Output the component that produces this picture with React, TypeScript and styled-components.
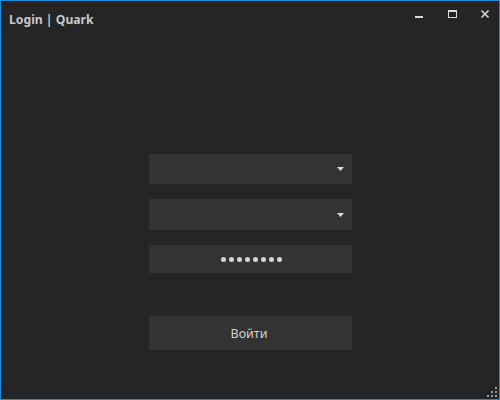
import React from "react";
import styled, { createGlobalStyle } from "styled-components";

const Global = createGlobalStyle`
  html, body { margin: 0; padding: 0; background: #252525; }
  * { box-sizing: border-box; }
`;

const Window = styled.div`
  position: relative;
  width: 500px;
  height: 400px;
  background: #252525;
  border: 1px solid #1b8ce0;
  display: flex;
  flex-direction: column;
  font-family: "Noto Sans", "Open Sans", sans-serif;
  color: #d2d2d2;
`;

const TitleBar = styled.div`
  display: flex;
  align-items: flex-start;
  justify-content: space-between;
  height: 38px;
  padding-left: 8px;
`;

const Title = styled.div`
  font-family: "Noto Sans", "Open Sans", sans-serif;
  font-weight: 700;
  font-size: 12.2px;
  line-height: 18px;
  margin-top: 10px;
  color: #c8c8c8;
`;

const Controls = styled.div`
  display: flex;
`;

const CtrlBtn = styled.div`
  width: 33px;
  height: 26px;
  display: flex;
  align-items: center;
  justify-content: flex-end;
  padding-right: 9px;
  svg { display: block; }
`;

const Body = styled.div`
  flex: 1;
  display: flex;
  justify-content: center;
  padding-top: 115px;
`;

const Form = styled.div`
  width: 203px;
  display: flex;
  flex-direction: column;
`;

const Field = styled.div<{ $h: number; $mb: number }>`
  height: ${(p) => p.$h}px;
  margin-bottom: ${(p) => p.$mb}px;
  background: #333333;
  display: flex;
  align-items: center;
  justify-content: flex-end;
  padding-right: 8px;
`;

const PasswordField = styled.div`
  height: 28px;
  margin-bottom: 43px;
  background: #333333;
  display: flex;
  align-items: center;
  justify-content: center;
  padding-left: 2px;
`;

const Dots = styled.span`
  display: flex;
  gap: 3px;
`;

const Dot = styled.span`
  width: 5px;
  height: 5px;
  border-radius: 50%;
  background: #d4d4d4;
`;

const Button = styled.div`
  height: 34px;
  background: #333333;
  display: flex;
  align-items: center;
  justify-content: center;
  font-size: 12.5px;
  color: #d0d0d0;
  padding-top: 1px;
  padding-right: 2px;
`;

const Grip = styled.svg`
  position: absolute;
  right: 1px;
  bottom: 1px;
`;

const Arrow = () => (
  <svg width="7" height="4" viewBox="0 0 7 4">
    <path d="M0 0H7L3.5 4Z" fill="#d8d8d8" />
  </svg>
);

export default function App() {
  return (
    <>
      <Global />
      <Window>
        <TitleBar>
          <Title>Login | Quark</Title>
          <Controls>
            <CtrlBtn>
              <svg width="10" height="10" viewBox="0 0 10 10">
                <rect x="1" y="7" width="8" height="2" fill="#d8d8d8" />
              </svg>
            </CtrlBtn>
            <CtrlBtn>
              <svg width="10" height="10" viewBox="0 0 10 10">
                <rect x="1.5" y="1.5" width="8" height="7" fill="none" stroke="#d8d8d8" strokeWidth="1" />
                <rect x="1" y="1" width="9" height="2" fill="#d8d8d8" />
              </svg>
            </CtrlBtn>
            <CtrlBtn>
              <svg width="10" height="10" viewBox="0 0 10 10">
                <path d="M1.5 1.5L8.5 8.5M8.5 1.5L1.5 8.5" stroke="#d8d8d8" strokeWidth="1.6" />
              </svg>
            </CtrlBtn>
          </Controls>
        </TitleBar>
        <Body>
          <Form>
            <Field $h={30} $mb={15}>
              <Arrow />
            </Field>
            <Field $h={31} $mb={15}>
              <Arrow />
            </Field>
            <PasswordField>
              <Dots>
                {Array.from({ length: 8 }).map((_, i) => (
                  <Dot key={i} />
                ))}
              </Dots>
            </PasswordField>
            <Button>Войти</Button>
          </Form>
        </Body>
        <Grip width="12" height="12" viewBox="0 0 12 12">
          {[
            [9, 1],
            [5, 5],
            [9, 5],
            [1, 9],
            [5, 9],
            [9, 9],
          ].map(([x, y], i) => (
            <rect key={i} x={x} y={y} width="2" height="2" fill="#9a9a9a" />
          ))}
        </Grip>
      </Window>
    </>
  );
}
